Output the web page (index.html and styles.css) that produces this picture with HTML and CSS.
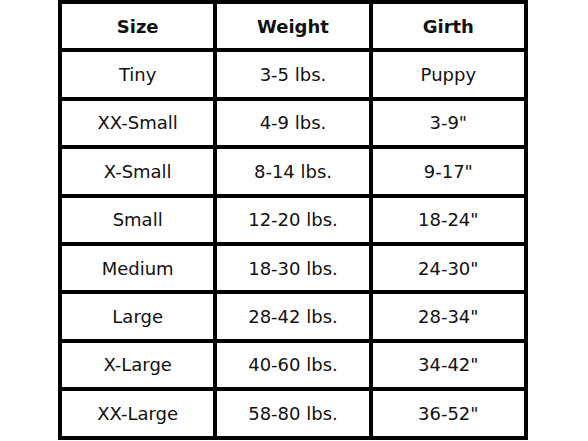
FILE: index.html
```html
<!DOCTYPE html>
<html>
<head>
<meta charset="utf-8">
<link rel="stylesheet" href="styles.css">
</head>
<body>
<div class="chart">
  <div class="cell head">Size</div><div class="cell head">Weight</div><div class="cell head">Girth</div>
  <div class="cell">Tiny</div><div class="cell">3-5 lbs.</div><div class="cell">Puppy</div>
  <div class="cell">XX-Small</div><div class="cell">4-9 lbs.</div><div class="cell">3-9"</div>
  <div class="cell">X-Small</div><div class="cell">8-14 lbs.</div><div class="cell">9-17"</div>
  <div class="cell">Small</div><div class="cell">12-20 lbs.</div><div class="cell">18-24"</div>
  <div class="cell">Medium</div><div class="cell">18-30 lbs.</div><div class="cell">24-30"</div>
  <div class="cell">Large</div><div class="cell">28-42 lbs.</div><div class="cell">28-34"</div>
  <div class="cell">X-Large</div><div class="cell">40-60 lbs.</div><div class="cell">34-42"</div>
  <div class="cell">XX-Large</div><div class="cell">58-80 lbs.</div><div class="cell">36-52"</div>
</div>
</body>
</html>
```
FILE: styles.css
```css
html, body {
  margin: 0;
  padding: 0;
  background: #fff;
  overflow: hidden;
}
.chart {
  margin-left: 58px;
  width: 470px;
  box-sizing: border-box;
  padding: 4px;
  background: #000;
  display: grid;
  grid-template-columns: repeat(3, 1fr);
  grid-template-rows: repeat(9, 44.4px);
  gap: 4px;
  font-family: "DejaVu Sans", Verdana, sans-serif;
  font-size: 18px;
  color: #111;
}
.cell {
  background: #fff;
  display: flex;
  align-items: center;
  justify-content: center;
}
.head {
  font-weight: bold;
}
```
